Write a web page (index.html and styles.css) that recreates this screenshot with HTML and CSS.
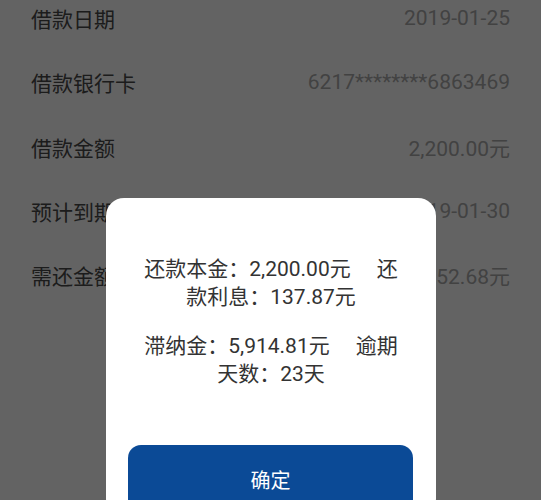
FILE: index.html
```html
<!DOCTYPE html>
<html lang="zh-CN">
<head>
<meta charset="utf-8">
<title>借款详情</title>
<link rel="stylesheet" href="styles.css">
</head>
<body>
<div class="page">
  <ul class="info-list">
    <li class="info-row"><span class="label">借款日期</span><span class="value">2019-01-25</span></li>
    <li class="info-row"><span class="label">借款银行卡</span><span class="value">6217********6863469</span></li>
    <li class="info-row"><span class="label">借款金额</span><span class="value">2,200.00元</span></li>
    <li class="info-row"><span class="label">预计到期日</span><span class="value">2019-01-30</span></li>
    <li class="info-row"><span class="label">需还金额</span><span class="value">8,252.68元</span></li>
  </ul>
</div>
<div class="mask">
  <div class="dialog">
    <p class="dialog-text">还款本金：2,200.00元&nbsp;&nbsp;&nbsp;&nbsp;&nbsp;还款利息：137.87元</p>
    <p class="dialog-text">滞纳金：5,914.81元&nbsp;&nbsp;&nbsp;&nbsp;&nbsp;逾期天数：23天</p>
    <button class="dialog-btn">确定</button>
  </div>
</div>
</body>
</html>
```
FILE: styles.css
```css
* { box-sizing: border-box; }
html, body {
  margin: 0;
  padding: 0;
  background: #fff;
  font-family: Roboto, "Noto Sans CJK SC", sans-serif;
  overflow: hidden;
  height: 500px;
}
.page {
  margin-top: -14px;
}
.info-list {
  list-style: none;
  margin: 0;
  padding: 0 31px 0 31px;
}
.info-row {
  height: 64.25px;
  display: flex;
  align-items: center;
  justify-content: space-between;
}
.label {
  font-family: "Noto Sans CJK SC", sans-serif;
  font-size: 21px;
  color: #4a4a4a;
}
.value {
  font-size: 21px;
  color: #aaaaaa;
}
.mask {
  position: fixed;
  inset: 0;
  background: rgba(0, 0, 0, 0.61);
  display: flex;
  justify-content: center;
  align-items: flex-start;
}
.dialog {
  margin-top: 198px;
  margin-left: 1px;
  width: 330px;
  background: #fff;
  border-radius: 18px;
  padding: 57px 22px 0;
  display: flex;
  flex-direction: column;
  align-items: center;
}
.dialog-text {
  margin: 0 0 21px;
  width: 260px;
  text-align: center;
  font-size: 21px;
  line-height: 28px;
  color: #333;
}
.dialog-text + .dialog-text {
  margin-bottom: 0;
}
.dialog-btn {
  margin-top: 57px;
  margin-left: -1px;
  width: 285px;
  height: 72px;
  border: none;
  border-radius: 13px;
  background: #0b4a96;
  color: #fff;
  font-family: "Noto Sans CJK SC", sans-serif;
  font-size: 20px;
  padding: 0 0 4px;
}
```
